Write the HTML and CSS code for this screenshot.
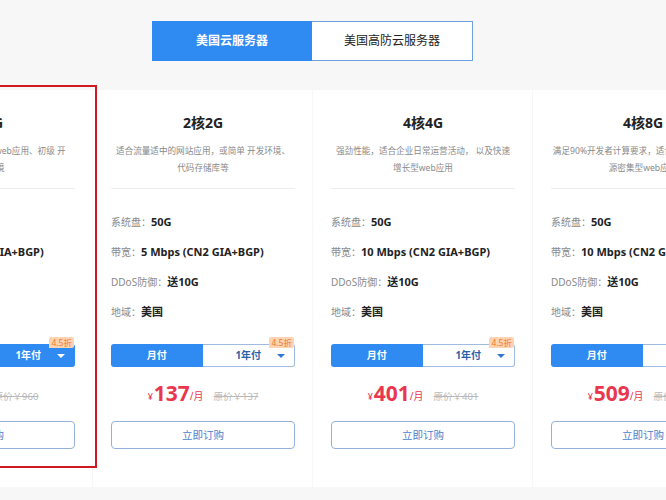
FILE: index.html
```html
<!DOCTYPE html>
<html lang="zh-CN">
<head>
<meta charset="utf-8">
<title>美国云服务器</title>
<link rel="stylesheet" href="styles.css">
</head>
<body>
<div class="page">
  <div class="tabs">
    <div class="tab tab-active">美国云服务器</div>
    <div class="tab">美国高防云服务器</div>
  </div>
  <div class="cards">
    <div class="card card-hover">
      <div class="hover-frame"></div>
      <div class="title">1核1G</div>
      <div class="desc">适合个人网站论坛、轻量web应用、初级 开<br>发测试环境</div>
      <div class="line"></div>
      <div class="specs">
        <div class="spec"><span class="k">系统盘：</span><span class="v">50G</span></div>
        <div class="spec"><span class="k">带宽：</span><span class="v">3 Mbps (CN2 GIA+BGP)</span></div>
        <div class="spec"><span class="k">DDoS防御：</span><span class="v">送10G</span></div>
        <div class="spec"><span class="k">地域：</span><span class="v">美国</span></div>
      </div>
      <div class="pay">
        <div class="seg">月付</div>
        <div class="seg seg-year seg-year-on">1年付<span class="tri"></span></div>
        <span class="badge">4.5折</span>
      </div>
      <div class="price"><span class="cur">¥</span><span class="num">432</span><span class="unit">/年</span><span class="orig">原价￥960</span></div>
      <div class="buy">立即订购</div>
    </div>
    <div class="card">
      <div class="title">2核2G</div>
      <div class="desc">适合流量适中的网站应用，或简单 开发环境、<br>代码存储库等</div>
      <div class="line"></div>
      <div class="specs">
        <div class="spec"><span class="k">系统盘：</span><span class="v">50G</span></div>
        <div class="spec"><span class="k">带宽：</span><span class="v">5 Mbps (CN2 GIA+BGP)</span></div>
        <div class="spec"><span class="k">DDoS防御：</span><span class="v">送10G</span></div>
        <div class="spec"><span class="k">地域：</span><span class="v">美国</span></div>
      </div>
      <div class="pay">
        <div class="seg seg-on">月付</div>
        <div class="seg seg-year">1年付<span class="tri"></span></div>
        <span class="badge">4.5折</span>
      </div>
      <div class="price"><span class="cur">¥</span><span class="num">137</span><span class="unit">/月</span><span class="orig">原价￥137</span></div>
      <div class="buy">立即订购</div>
    </div>
    <div class="card">
      <div class="title">4核4G</div>
      <div class="desc">强劲性能，适合企业日常运营活动， 以及快速<br>增长型web应用</div>
      <div class="line"></div>
      <div class="specs">
        <div class="spec"><span class="k">系统盘：</span><span class="v">50G</span></div>
        <div class="spec"><span class="k">带宽：</span><span class="v">10 Mbps (CN2 GIA+BGP)</span></div>
        <div class="spec"><span class="k">DDoS防御：</span><span class="v">送10G</span></div>
        <div class="spec"><span class="k">地域：</span><span class="v">美国</span></div>
      </div>
      <div class="pay">
        <div class="seg seg-on">月付</div>
        <div class="seg seg-year">1年付<span class="tri"></span></div>
        <span class="badge">4.5折</span>
      </div>
      <div class="price"><span class="cur">¥</span><span class="num">401</span><span class="unit">/月</span><span class="orig">原价￥401</span></div>
      <div class="buy">立即订购</div>
    </div>
    <div class="card">
      <div class="title">4核8G</div>
      <div class="desc">满足90%开发者计算要求，适合高并发、大型资<br>源密集型web应用</div>
      <div class="line"></div>
      <div class="specs">
        <div class="spec"><span class="k">系统盘：</span><span class="v">50G</span></div>
        <div class="spec"><span class="k">带宽：</span><span class="v">10 Mbps (CN2 GIA+BGP)</span></div>
        <div class="spec"><span class="k">DDoS防御：</span><span class="v">送10G</span></div>
        <div class="spec"><span class="k">地域：</span><span class="v">美国</span></div>
      </div>
      <div class="pay">
        <div class="seg seg-on">月付</div>
        <div class="seg seg-year">1年付<span class="tri"></span></div>
        <span class="badge">4.5折</span>
      </div>
      <div class="price"><span class="cur">¥</span><span class="num">509</span><span class="unit">/月</span><span class="orig">原价￥509</span></div>
      <div class="buy">立即订购</div>
    </div>
  </div>
</div>
</body>
</html>
```
FILE: styles.css
```css
html, body {
  margin: 0;
  padding: 0;
  background: #f7f7f7;
  overflow: hidden;
}
body {
  width: 666px;
  height: 500px;
  font-family: "Noto Sans", "Noto Sans CJK SC", sans-serif;
  color: #333;
}
.page {
  padding-top: 21px;
}
.tabs {
  display: flex;
  margin-left: 152px;
}
.tab {
  box-sizing: border-box;
  width: 161px;
  height: 40px;
  line-height: 38px;
  text-align: center;
  font-size: 12px;
  background: #fff;
  border: 1px solid #6e9fe0;
  border-left: none;
  color: #222;
}
.tab-active {
  width: 160px;
  background: #2f8af2;
  border: 1px solid #2f8af2;
  color: #fff;
  font-weight: bold;
}
.cards {
  display: flex;
  gap: 1px;
  margin-top: 29px;
  margin-left: -127px;
  width: 900px;
}
.card {
  position: relative;
  box-sizing: border-box;
  flex: 0 0 219px;
  height: 397px;
  background: #fff;
  padding: 23px 17px 0 18px;
  text-align: center;
}
.card-hover {
  z-index: 2;
}
.hover-frame {
  position: absolute;
  left: -5px;
  right: -5px;
  top: -5px;
  bottom: 19px;
  border: 2px solid #cf1820;
  pointer-events: none;
}
.title {
  font-size: 14px;
  line-height: 20px;
  font-weight: bold;
  color: #222;
}
.desc {
  margin-top: 10px;
  font-size: 8.6px;
  line-height: 17px;
  color: #8a8a8a;
  height: 34px;
  white-space: nowrap;
}
.line {
  margin-top: 11px;
  height: 1px;
  background: #ececec;
}
.specs {
  margin-top: 18px;
  text-align: left;
}
.spec {
  height: 30px;
  line-height: 30px;
  font-size: 10px;
  white-space: nowrap;
}
.k {
  color: #8a8a8a;
}
.v {
  font-weight: bold;
  color: #222;
  font-size: 11px;
}
.pay {
  position: relative;
  display: flex;
  margin-top: 17px;
  height: 23px;
}
.seg {
  box-sizing: border-box;
  flex: 1;
  height: 23px;
  line-height: 23px;
  font-size: 10px;
  font-weight: bold;
  color: #2c5fa8;
}
.seg-on {
  background: #2f8af2;
  color: #fff;
  border-radius: 3px 0 0 3px;
}
.seg-year {
  position: relative;
  border: 1px solid #9fbbe2;
  border-left: none;
  border-radius: 0 3px 3px 0;
  line-height: 21px;
}
.seg-year-on {
  background: #2f8af2;
  border-color: #2f8af2;
  color: #fff;
}
.tri {
  position: absolute;
  right: 9px;
  top: 9px;
  width: 0;
  height: 0;
  border-left: 4px solid transparent;
  border-right: 4px solid transparent;
  border-top: 4px solid #2f78d8;
}
.seg-year-on .tri {
  border-top-color: #fff;
}
.badge {
  position: absolute;
  right: 1px;
  top: -7px;
  background: #fcd4b4;
  color: #f07a2a;
  font-size: 8.5px;
  line-height: 11px;
  padding: 0 2px;
  border-radius: 2px 2px 2px 0;
}
.price {
  margin-top: 12px;
  height: 28px;
  line-height: 28px;
  color: #e8374e;
  white-space: nowrap;
}
.cur {
  font-size: 9px;
  margin-right: 1px;
}
.num {
  font-size: 21px;
  font-weight: bold;
  vertical-align: -1px;
}
.unit {
  font-size: 10px;
}
.orig {
  margin-left: 10px;
  font-size: 9.5px;
  color: #b8b8b8;
  text-decoration: line-through;
}
.buy {
  box-sizing: border-box;
  margin-top: 14px;
  height: 28px;
  line-height: 26px;
  border: 1px solid #93b1db;
  border-radius: 4px;
  font-size: 10.5px;
  color: #4b7fcc;
}
```
